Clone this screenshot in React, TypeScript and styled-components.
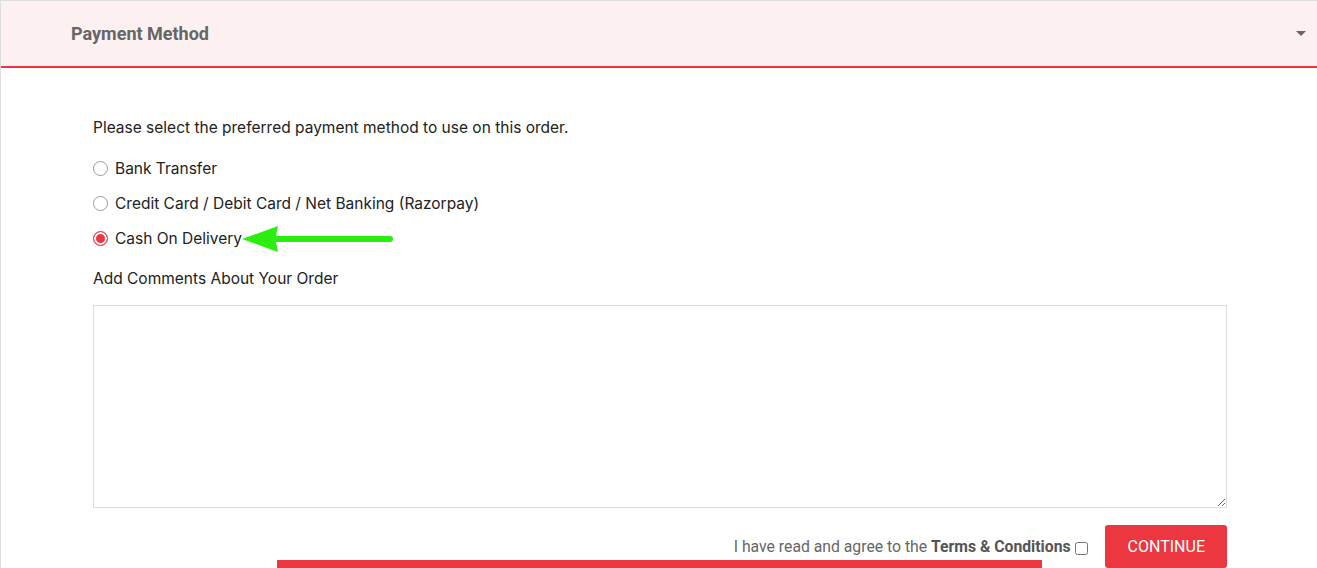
import React, { useState } from 'react';
import styled, { createGlobalStyle } from 'styled-components';

const colors = {
  brand: '#ec3741',
  headerBg: '#fdf0f0',
  border: '#dddddd',
  text: '#222222',
  muted: '#666666',
  arrow: '#2bee10',
};

const GlobalStyle = createGlobalStyle`
  html, body {
    margin: 0;
    padding: 0;
    background: #fff;
    overflow: hidden;
  }
  body {
    font-family: Inter, "Open Sans", sans-serif;
    color: ${colors.text};
  }
`;

const Panel = styled.section`
  border-top: 1px solid ${colors.border};
  border-left: 1px solid ${colors.border};
  min-height: 567px;
  box-sizing: border-box;
`;

const Header = styled.div`
  display: flex;
  align-items: center;
  justify-content: space-between;
  height: 65px;
  padding: 0 11px 0 70px;
  background: ${colors.headerBg};
  border-bottom: 2px solid ${colors.brand};
`;

const Title = styled.h4`
  margin: 0;
  font-family: Roboto, "Liberation Sans", sans-serif;
  font-size: 18px;
  font-weight: 700;
  color: ${colors.muted};
`;

const Caret = styled.span`
  width: 0;
  height: 0;
  border-left: 5px solid transparent;
  border-right: 5px solid transparent;
  border-top: 5px solid ${colors.muted};
`;

const Body = styled.div`
  padding: 49px 90px 0 92px;
`;

const Intro = styled.p`
  margin: 0 0 12px;
  font-size: 15.5px;
  line-height: 22px;
`;

const Option = styled.label`
  display: flex;
  align-items: center;
  gap: 7px;
  height: 35px;
  font-size: 15.5px;
  cursor: pointer;
`;

const Radio = styled.span<{ $checked: boolean }>`
  box-sizing: border-box;
  width: 15px;
  height: 15px;
  border-radius: 50%;
  border: 1px solid ${(p) => (p.$checked ? colors.brand : '#9a9a9a')};
  background: ${(p) => (p.$checked ? colors.brand : '#fff')};
  box-shadow: ${(p) => (p.$checked ? 'inset 0 0 0 2px #fff' : 'none')};
`;

const OptionRow = styled.div`
  display: flex;
  align-items: center;
`;

const Arrow = styled.svg`
  display: block;
  margin-top: 1px;
`;

const CommentsLabel = styled.div`
  margin: 12px 0 15px;
  font-size: 15.5px;
  line-height: 22px;
`;

const Comments = styled.textarea`
  display: block;
  box-sizing: border-box;
  width: 100%;
  height: 203px;
  border: 1px solid ${colors.border};
  resize: vertical;
  outline: none;
  margin: 0;
`;

const Footer = styled.div`
  display: flex;
  justify-content: flex-end;
  align-items: center;
  gap: 17px;
  margin-top: 17px;
`;

const Agree = styled.label`
  display: flex;
  align-items: center;
  gap: 4px;
  font-family: Roboto, "Liberation Sans", sans-serif;
  font-size: 15.75px;
  color: ${colors.muted};

  b {
    color: #555;
    font-weight: 700;
  }
`;

const Check = styled.input`
  width: 13px;
  height: 13px;
  margin: 3px 0 0;
`;

const Continue = styled.button`
  height: 43px;
  padding: 0 22px 0 23px;
  border: none;
  border-radius: 3px;
  background: ${colors.brand};
  color: #fff;
  font-family: Roboto, "Liberation Sans", sans-serif;
  font-size: 16px;
  text-transform: uppercase;
  cursor: pointer;
`;

const BottomBar = styled.div`
  position: fixed;
  left: 277px;
  bottom: 0;
  width: 765px;
  height: 8px;
  background: ${colors.brand};
`;

const options = [
  'Bank Transfer',
  'Credit Card / Debit Card / Net Banking (Razorpay)',
  'Cash On Delivery',
];

export default function App() {
  const [selected, setSelected] = useState(2);

  return (
    <>
      <GlobalStyle />
      <Panel>
        <Header>
          <Title>Payment Method</Title>
          <Caret />
        </Header>
        <Body>
          <Intro>Please select the preferred payment method to use on this order.</Intro>
          {options.map((label, i) => (
            <OptionRow key={label}>
              <Option onClick={() => setSelected(i)}>
                <Radio $checked={selected === i} />
                {label}
              </Option>
              {i === 2 && (
                <Arrow width="152" height="28" viewBox="0 0 152 28">
                  <path d="M0 14 L36 1 L34 11 L148 11 A3 3 0 0 1 148 17 L34 17 L36 27 Z" fill={colors.arrow} />
                </Arrow>
              )}
            </OptionRow>
          ))}
          <CommentsLabel>Add Comments About Your Order</CommentsLabel>
          <Comments />
          <Footer>
            <Agree>
              <span>
                I have read and agree to the <b>Terms &amp; Conditions</b>
              </span>
              <Check type="checkbox" />
            </Agree>
            <Continue>Continue</Continue>
          </Footer>
        </Body>
      </Panel>
      <BottomBar />
    </>
  );
}
